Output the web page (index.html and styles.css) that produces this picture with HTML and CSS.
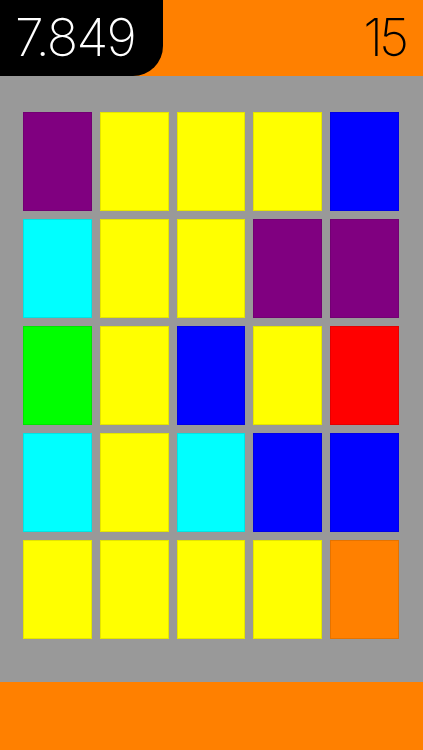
FILE: index.html
```html
<!DOCTYPE html>
<html>
<head>
<meta charset="utf-8">
<link rel="stylesheet" href="styles.css">
</head>
<body>
<div class="app">
  <header class="top">
    <div class="timer">7.849</div>
    <div class="score">15</div>
  </header>
  <main class="board">
    <div class="grid">
      <div class="tile purple"></div><div class="tile yellow"></div><div class="tile yellow"></div><div class="tile yellow"></div><div class="tile blue"></div>
      <div class="tile cyan"></div><div class="tile yellow"></div><div class="tile yellow"></div><div class="tile purple"></div><div class="tile purple"></div>
      <div class="tile lime"></div><div class="tile yellow"></div><div class="tile blue"></div><div class="tile yellow"></div><div class="tile red"></div>
      <div class="tile cyan"></div><div class="tile yellow"></div><div class="tile cyan"></div><div class="tile blue"></div><div class="tile blue"></div>
      <div class="tile yellow"></div><div class="tile yellow"></div><div class="tile yellow"></div><div class="tile yellow"></div><div class="tile orange"></div>
    </div>
  </main>
  <footer class="bottom"></footer>
</div>
</body>
</html>
```
FILE: styles.css
```css
html, body {
  margin: 0;
  padding: 0;
}
body {
  width: 423px;
  height: 750px;
  overflow: hidden;
  font-family: Inter, "Liberation Sans", sans-serif;
}
.app {
  display: flex;
  flex-direction: column;
  height: 750px;
}
.top {
  height: 76px;
  background: #ff8000;
  display: flex;
  justify-content: space-between;
  align-items: stretch;
}
.timer {
  width: 163px;
  background: #000;
  color: #fff;
  border-bottom-right-radius: 30px;
  font-size: 52px;
  font-weight: 200;
  line-height: 76px;
  padding-left: 15px;
  box-sizing: border-box;
  letter-spacing: -1.8px;
}
.score {
  color: #000;
  font-size: 52px;
  font-weight: 200;
  line-height: 76px;
  padding-right: 18px;
  letter-spacing: -4px;
}
.board {
  height: 606px;
  background: #999999;
  box-sizing: border-box;
  padding: 36px 24px 0 23px;
}
.grid {
  display: grid;
  grid-template-columns: repeat(5, 1fr);
  grid-auto-rows: 99px;
  gap: 8px;
}
.tile {
  box-sizing: border-box;
  border: 1px solid rgba(0, 0, 0, 0.1);
}
.purple { background: #800080; }
.yellow { background: #ffff00; }
.blue { background: #0000ff; }
.cyan { background: #00ffff; }
.lime { background: #00ff00; }
.red { background: #ff0000; }
.orange { background: #ff8000; }
.bottom {
  flex: 1;
  background: #ff8000;
}
```
